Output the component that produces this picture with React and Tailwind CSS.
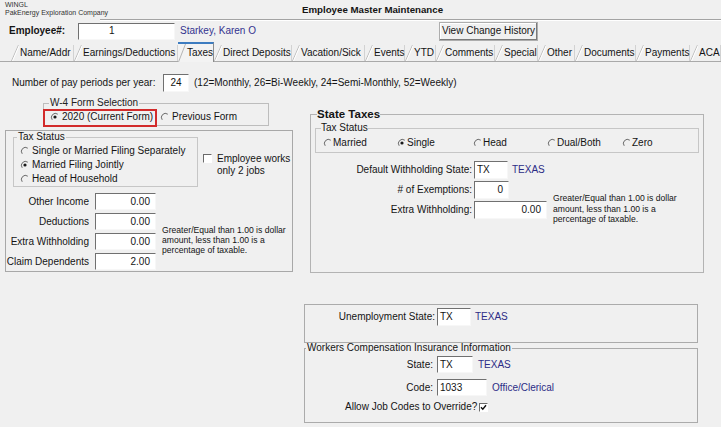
import React from "react";

const tabs = [
  ["Name/Addr", "w-[63px]"],
  ["Earnings/Deductions", "w-[104px]"],
  ["Taxes", "w-[36px]", true],
  ["Direct Deposits", "w-[78px]"],
  ["Vacation/Sick", "w-[73px]"],
  ["Events", "w-[40px]"],
  ["YTD", "w-[31px]"],
  ["Comments", "w-[59px]"],
  ["Special", "w-[43px]"],
  ["Other", "w-[37px]"],
  ["Documents", "w-[61px]"],
  ["Payments", "w-[54px]"],
  ["ACA", "w-[31px]"],
];

function Radio({ checked }) {
  return (
    <svg width="10" height="10" viewBox="0 0 10 10" className="shrink-0">
      <path d="M7.8 2.2A4 4 0 0 0 2.2 7.8" fill="none" stroke="#6a6a6a" strokeWidth="1" />
      {checked && <circle cx="5" cy="5" r="1.6" fill="#1a1a1a" />}
    </svg>
  );
}

function Check({ checked }) {
  return (
    <span className="relative block w-[9px] h-[9px] shrink-0 bg-white border border-t-[#6a6a6a] border-l-[#6a6a6a] border-r-white border-b-white">
      {checked && (
        <svg width="7" height="7" viewBox="0 0 7 7" className="block">
          <path d="M1 3.2 L2.8 5.2 L6 1.2" fill="none" stroke="#111" strokeWidth="1.4" />
        </svg>
      )}
    </span>
  );
}

function Edit({ className, children }) {
  return (
    <div
      className={
        "flex items-center bg-white border border-t-[#707070] border-l-[#707070] border-r-[#f7f7f7] border-b-[#f7f7f7] " +
        className
      }
    >
      {children}
    </div>
  );
}

function Tab({ label, width, active }) {
  if (active) {
    return (
      <div className={"flex items-center h-[20px] mb-[-1px] bg-[#f3f3f3] border-t-2 border-t-[#3d7cc0] border-r border-r-[#8c8c8c] " + width}>
        <svg width="8" height="18" viewBox="0 0 8 18" className="shrink-0">
          <path d="M0.5 18 L7.5 0" stroke="#b5b5b5" strokeWidth="1" />
        </svg>
        <span className="ml-px whitespace-nowrap">{label}</span>
      </div>
    );
  }
  return (
    <div className={"flex items-center h-[16px] border-r border-r-[#d2d2d2] " + width}>
      <svg width="8" height="16" viewBox="0 0 8 16" className="shrink-0">
        <path d="M0.5 16 L7.5 0" stroke="#bdbdbd" strokeWidth="1" />
        <path d="M1.5 16 L8.5 0" stroke="#ffffff" strokeWidth="1" />
      </svg>
      <span className="ml-px whitespace-nowrap">{label}</span>
    </div>
  );
}

const note = (
  <>
    Greater/Equal than 1.00 is dollar
    <br />
    amount, less than 1.00 is a
    <br />
    percentage of taxable.
  </>
);

export default function App() {
  return (
    <div className="w-[721px] h-[427px] overflow-hidden bg-[#f0f0f0] text-[10px] leading-[12px] text-[#141414] font-['Liberation_Sans',Arial,sans-serif]">
      {/* Title */}
      <div className="flex h-[19px]">
        <div className="w-[302px] pl-[5px] pt-[1px] text-[7px] leading-[8px] text-[#333]">
          <div>WINGL</div>
          <div>PakEnergy Exploration Company</div>
        </div>
        <div className="pt-[4px] text-[9.7px] leading-[12px] font-bold">Employee Master Maintenance</div>
      </div>
      <div className="ml-[100px] h-[2px] border-t border-b border-t-[#a3a3a3] border-b-white" />

      {/* Employee row */}
      <div className="flex items-center h-[20px] pl-[9px]">
        <div className="w-[69px] font-bold">Employee#:</div>
        <Edit className="w-[97px] h-[17px] pl-[30px]">1</Edit>
        <div className="ml-[5px] w-[259px] text-[#33338f]">Starkey, Karen O</div>
        <div className="w-[99px] h-[19px] flex items-center justify-center border border-[#adadad] bg-[#f0f0f0] shadow-[inset_-1px_-1px_0_#7a7a7a,inset_1px_1px_0_#fff]">
          View Change History
        </div>
      </div>

      {/* Tabs */}
      <div className="mt-px flex items-end h-[20px] pl-[11px] border-b border-b-[#a9a9a9]">
        {tabs.map(([label, width, active]) => (
          <Tab key={label} label={label} width={width} active={active} />
        ))}
      </div>

      {/* Pay periods */}
      <div className="mt-[12px] flex items-center h-[18px] pl-[12px]">
        <span className="w-[151px]">Number of pay periods per year:</span>
        <Edit className="w-[26px] h-[18px] justify-center">24</Edit>
        <span className="ml-[5px]">(12=Monthly, 26=Bi-Weekly, 24=Semi-Monthly, 52=Weekly)</span>
      </div>

      <div className="flex items-start">
        {/* Left column */}
        <div className="ml-[5px] w-[288px]">
          <fieldset className="relative ml-[38px] mt-[6px] w-[226px] border border-[#bdbdbd] p-0">
            <legend className="ml-[5px] px-px leading-[10px] text-[#222]">W-4 Form Selection</legend>
            <div className="relative flex items-center h-[16px] mt-px">
              <div className="ml-[6px] w-[110px] flex items-center gap-[2px]">
                <Radio checked />
                <span>2020 (Current Form)</span>
              </div>
              <div className="flex items-center gap-[2px]">
                <Radio />
                <span>Previous Form</span>
              </div>
              <div className="absolute left-[-1px] top-0 w-[114px] h-[18px] border-2 border-[#d22b2b]" />
            </div>
          </fieldset>

          <div className="mt-[4px] w-[288px] h-[142px] border border-[#a8a8a8]">
            <div className="flex items-start">
              <fieldset className="ml-[7px] mt-px w-[185px] border border-[#c6c6c6] p-0">
                <legend className="ml-[3px] px-px leading-[10px]">Tax Status</legend>
                <div className="pt-[2px]">
                  <div className="flex items-center h-[14px] pl-[6px] gap-[2px]">
                    <Radio />
                    <span>Single or Married Filing Separately</span>
                  </div>
                  <div className="flex items-center h-[14px] pl-[6px] gap-[2px]">
                    <Radio checked />
                    <span>Married Filing Jointly</span>
                  </div>
                  <div className="flex items-center h-[14px] pl-[6px] gap-[2px]">
                    <Radio />
                    <span>Head of Household</span>
                  </div>
                </div>
              </fieldset>
              <div className="ml-[5px] mt-[22px] flex items-start gap-[5px]">
                <div className="mt-px">
                  <Check />
                </div>
                <div>
                  Employee works
                  <br />
                  only 2 jobs
                </div>
              </div>
            </div>

            <div className="mt-[6px] flex items-start">
              <div className="flex flex-col gap-[3px]">
                {[
                  ["Other Income", "0.00"],
                  ["Deductions", "0.00"],
                  ["Extra Withholding", "0.00"],
                  ["Claim Dependents", "2.00"],
                ].map(([label, value]) => (
                  <div key={label} className="flex items-center h-[17px]">
                    <span className="w-[83px] text-right">{label}</span>
                    <Edit className="ml-[6px] w-[61px] h-[17px] justify-end pr-[5px]">{value}</Edit>
                  </div>
                ))}
              </div>
              <div className="ml-[6px] mt-[32px] text-[8.6px] leading-[10px]">{note}</div>
            </div>
          </div>
        </div>

        {/* Right column */}
        <div className="ml-[11px] w-[400px]">
          <fieldset className="ml-[6px] mt-[16px] w-[394px] h-[165px] border border-[#b3b3b3] p-0">
            <legend className="ml-[6px] text-[11.5px] leading-[13px] font-bold">State Taxes</legend>
            <fieldset className="ml-[4px] mt-[2px] w-[384px] border border-[#c6c6c6] p-0">
              <legend className="ml-[5px] leading-[10px]">Tax Status</legend>
              <div className="flex items-center h-[19px] pl-[7px]">
                <div className="w-[74px] flex items-center">
                  <Radio />
                  <span>Married</span>
                </div>
                <div className="w-[76px] flex items-center">
                  <Radio checked />
                  <span>Single</span>
                </div>
                <div className="w-[74px] flex items-center">
                  <Radio />
                  <span>Head</span>
                </div>
                <div className="w-[75px] flex items-center">
                  <Radio />
                  <span>Dual/Both</span>
                </div>
                <div className="flex items-center">
                  <Radio />
                  <span>Zero</span>
                </div>
              </div>
            </fieldset>

            <div className="mt-[8px] flex items-center h-[18px]">
              <span className="w-[161px] text-right">Default Withholding State:</span>
              <Edit className="ml-[2px] w-[34px] h-[18px] pl-[2px]">TX</Edit>
              <span className="ml-[4px] text-[#2c2c86]">TEXAS</span>
            </div>
            <div className="mt-[2px] flex items-start">
              <div className="flex flex-col gap-[2px]">
                <div className="flex items-center h-[18px]">
                  <span className="w-[161px] text-right"># of Exemptions:</span>
                  <Edit className="ml-[2px] w-[35px] h-[18px] justify-end pr-[5px]">0</Edit>
                </div>
                <div className="flex items-center h-[18px]">
                  <span className="w-[161px] text-right">Extra Withholding:</span>
                  <Edit className="ml-[2px] w-[73px] h-[18px] justify-end pr-[5px]">0.00</Edit>
                </div>
              </div>
              <div className="ml-[6px] mt-[12px] text-[8.6px] leading-[10.5px]">{note}</div>
            </div>
          </fieldset>

          <div className="mt-[31px] w-[394px] h-[39px] border border-[#ababab]">
            <div className="mt-[3px] flex items-center h-[18px]">
              <span className="w-[130px] text-right">Unemployment State:</span>
              <Edit className="ml-[2px] w-[34px] h-[18px] pl-[2px]">TX</Edit>
              <span className="ml-[4px] text-[#2c2c86]">TEXAS</span>
            </div>
          </div>

          <fieldset className="w-[394px] h-[80px] border border-[#ababab] p-0">
            <legend className="ml-px px-px leading-[10px]">Workers Compensation Insurance Information</legend>
            <div className="mt-[3px] flex items-center h-[17px]">
              <span className="w-[128px] text-right">State:</span>
              <Edit className="ml-[4px] w-[36px] h-[17px] pl-[2px]">TX</Edit>
              <span className="ml-[5px] text-[#2c2c86]">TEXAS</span>
            </div>
            <div className="mt-[6px] flex items-center h-[17px]">
              <span className="w-[128px] text-right">Code:</span>
              <Edit className="ml-[4px] w-[50px] h-[17px] pl-[2px]">1033</Edit>
              <span className="ml-[5px] text-[#2c2c86]">Office/Clerical</span>
            </div>
            <div className="mt-[4px] flex items-center h-[14px] ml-[40px]">
              <span>Allow Job Codes to Override?</span>
              <div className="ml-[2px]">
                <Check checked />
              </div>
            </div>
          </fieldset>
        </div>
      </div>
    </div>
  );
}
